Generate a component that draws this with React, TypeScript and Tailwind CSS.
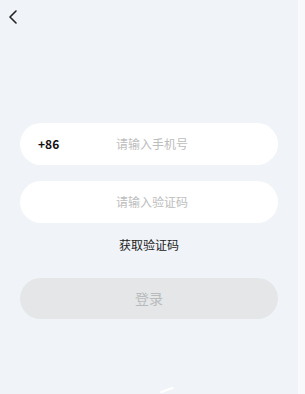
export default function App() {
  return (
    <div
      className="flex h-[394px] w-[305px] bg-[#f7f9fb]"
      style={{ fontFamily: '"Noto Sans CJK SC", "Noto Sans", sans-serif' }}
    >
      <div className="flex h-full w-[298px] flex-col bg-[#f0f4f8]">
        <div className="flex h-[33px] items-center pl-[7px]">
          <svg width="12" height="16" viewBox="0 0 12 16" fill="none">
            <path d="M9 2 L3 8 L9 14" stroke="#222" strokeWidth="1.6" strokeLinecap="round" strokeLinejoin="round" />
          </svg>
        </div>

        <div className="mt-[90px] flex flex-col px-[20px]">
          <div className="flex h-[42px] items-center rounded-full bg-white pl-[18px]">
            <span className="w-[78px] text-[12px] font-bold text-[#111]">+86</span>
            <span className="text-[12px] text-[#bdbdbd]">请输入手机号</span>
          </div>

          <div className="mt-[16px] flex h-[42px] items-center rounded-full bg-white pl-[96px]">
            <span className="text-[12px] text-[#bdbdbd]">请输入验证码</span>
          </div>

          <div className="mt-[12px] flex h-[20px] items-center justify-center">
            <span className="text-[12px] text-[#222]">获取验证码</span>
          </div>

          <div className="mt-[23px] flex h-[41px] items-center justify-center rounded-full bg-[#e4e6e7]">
            <span className="text-[14px] text-[#b8bbbd]">登录</span>
          </div>
        </div>

        <div className="mt-auto flex justify-center pb-[3px] pl-[36px]">
          <div className="h-[2px] w-[14px] -rotate-[20deg] rounded-full bg-white" />
        </div>
      </div>
    </div>
  );
}
